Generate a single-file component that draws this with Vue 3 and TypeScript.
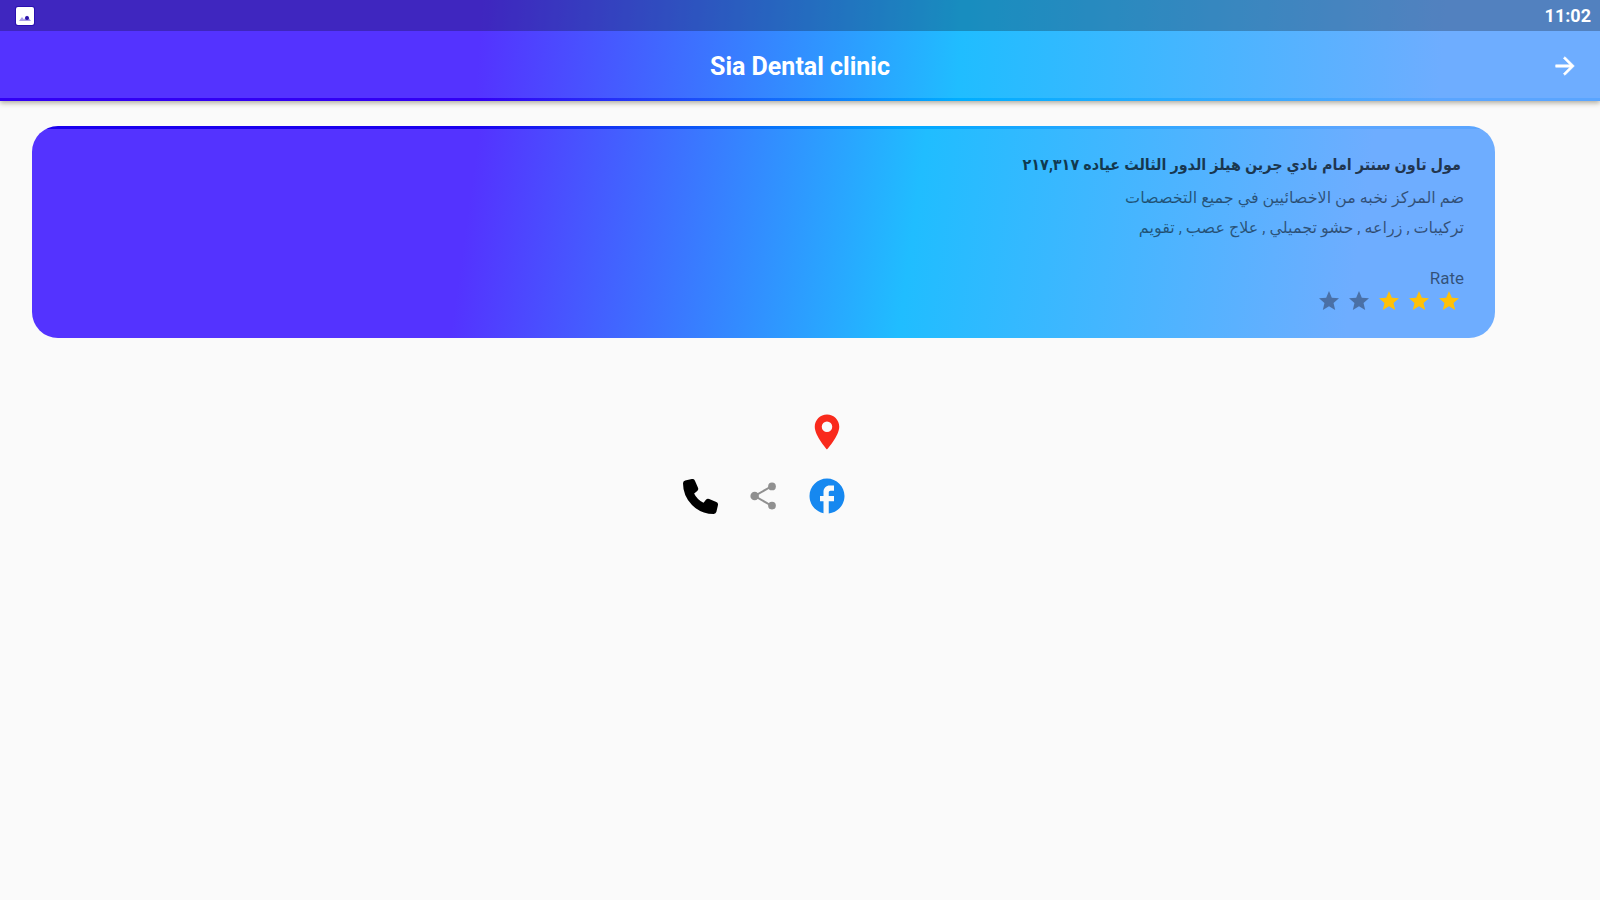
<script setup lang="ts">
interface Star {
  value: number
  filled: boolean
}

const rating = 3
const stars: Star[] = [1, 2, 3, 4, 5].map((value) => ({ value, filled: value <= rating }))
const services: string[] = [
  'ضم المركز نخبه من الاخصائيين في جميع التخصصات',
  'تركيبات , زراعه , حشو تجميلي , علاج عصب , تقويم',
]
</script>

<template>
  <div class="screen" dir="rtl">
    <header class="top">
      <div class="status" dir="ltr">
        <svg class="notice" viewBox="0 0 20 20" aria-hidden="true">
          <rect x="0" y="0" width="20" height="20" rx="3" fill="#2a0fb0" />
          <rect x="1" y="1" width="18" height="18" rx="2" fill="#fff" />
          <path d="M4 15 L7 11 L9 13.500 L12 9.500 L16 15 Z" fill="#a99de8" />
          <circle cx="12" cy="12" r="2" fill="#2a12a8" />
        </svg>
        <time class="clock">11:02</time>
      </div>
      <div class="bar">
        <h1 class="title">Sia Dental clinic</h1>
        <button class="back" type="button" aria-label="Back">
          <svg viewBox="0 0 24 24" aria-hidden="true">
            <path d="M12 4l-1.410 1.410L16.170 11H4v2h12.170l-5.580 5.590L12 20l8-8z" />
          </svg>
        </button>
      </div>
    </header>

    <main class="content">
      <section class="card">
        <h2 class="address">مول تاون سنتر امام نادي جرين هيلز الدور الثالث عياده ٢١٧,٣١٧</h2>
        <p v-for="line in services" :key="line" class="line">{{ line }}</p>
        <p class="rate">Rate</p>
        <div class="stars" role="img" aria-label="3 / 5">
          <svg
            v-for="star in stars"
            :key="star.value"
            class="star"
            :class="{ filled: star.filled }"
            viewBox="0 0 24 24"
          >
            <path d="M12 17.270L18.180 21l-1.640-7.030L22 9.240l-7.190-.610L12 2 9.190 8.630 2 9.240l5.460 4.730L5.820 21z" />
          </svg>
        </div>
      </section>

      <nav class="links">
        <a class="link pin" href="#map" aria-label="Location">
          <svg viewBox="0 0 24 24">
            <path d="M12 2C8.130 2 5 5.130 5 9c0 5.250 7 13 7 13s7-7.750 7-13c0-3.870-3.130-7-7-7zm0 10a3 3 0 0 1 0-6 3 3 0 0 1 0 6z" />
          </svg>
        </a>
        <a class="link facebook" href="#facebook" aria-label="Facebook">
          <svg viewBox="0 0 24 24">
            <path d="M22 12c0-5.520-4.480-10-10-10S2 6.480 2 12c0 4.840 3.440 8.870 8 9.800V15H8v-3h2V9.500C10 7.570 11.570 6 13.500 6H16v3h-2c-.550 0-1 .450-1 1v2h3v3h-3v6.950c5.050-.500 9-4.760 9-9.950z" />
          </svg>
        </a>
        <a class="link share" href="#share" aria-label="Share">
          <svg viewBox="0 0 24 24">
            <path d="M18 4.500L5 12l13 7.500" fill="none" stroke="currentColor" stroke-width="1.500" />
            <circle cx="18" cy="4.800" r="2.900" />
            <circle cx="5" cy="12" r="3.200" />
            <circle cx="18" cy="19.200" r="2.900" />
          </svg>
        </a>
        <a class="link phone" href="#call" aria-label="Call">
          <svg viewBox="-20 -20 552 552">
            <path
              transform="translate(512 0) scale(-1 1)"
              stroke="currentColor"
              stroke-width="40"
              stroke-linejoin="round"
              d="M493.400 24.600l-104-24c-11.300-2.600-22.900 3.300-27.500 13.900l-48 112c-4.200 9.800-1.400 21.300 6.900 28l60.600 49.600c-36 76.700-98.900 140.500-177.200 177.200l-49.600-60.600c-6.800-8.300-18.200-11.100-28-6.900l-112 48C3.900 366.500-2 378.100.600 389.400l24 104C27.100 504.200 36.700 512 48 512c256.100 0 464-207.500 464-464 0-11.200-7.700-20.900-18.600-23.400z"
            />
          </svg>
        </a>
      </nav>
    </main>
  </div>
</template>

<style>
body {
  margin: 0;
  background: #fafafa;
}
</style>

<style scoped>
.screen {
  min-height: 100vh;
  background: #fafafa;
  color: #fff;
  font-family: Roboto, "DejaVu Sans", sans-serif;
}

.top {
  position: relative;
  background:
    linear-gradient(94deg, #3200f4 30%, #00aeff 60%, #5aa5ff 90%) bottom / 100% 3px no-repeat,
    linear-gradient(94deg, #5433ff 30%, #20bdff 60%, #6eadff 90%);
  box-shadow: 0 2px 5px rgba(60, 50, 20, 0.4);
}

.status {
  display: flex;
  align-items: center;
  justify-content: space-between;
  height: 31px;
  padding: 0 9px 0 15px;
  background: rgba(0, 0, 0, 0.25);
}

.notice {
  width: 20px;
  height: 20px;
}

.clock {
  font-size: 18px;
  font-weight: 700;
}

.bar {
  display: grid;
  grid-template-columns: 70px 1fr 70px;
  align-items: center;
  height: 70px;
}

.title {
  grid-column: 2;
  grid-row: 1;
  margin: 0;
  text-align: center;
  font-size: 25px;
  font-weight: 700;
}

.back {
  grid-column: 1;
  grid-row: 1;
  display: flex;
  justify-content: center;
  padding: 0;
  border: 0;
  background: none;
  cursor: pointer;
}

.back svg {
  width: 28px;
  height: 28px;
  fill: #fff;
  stroke: #fff;
  stroke-width: 0.5;
}

.content {
  padding: 25px 105px 0 32px;
}

.card {
  box-sizing: border-box;
  min-height: 212px;
  padding: 24px 31px 20px;
  border-radius: 26px;
  background:
    linear-gradient(98deg, #1a00ee 30%, #00a8ff 60%, #5aa5ff 90%) top / 100% 3px no-repeat,
    linear-gradient(98deg, #5433ff 30%, #20bdff 60%, #6eadff 90%);
}

.address,
.line,
.rate {
  margin: 0;
  line-height: 30px;
}

.address {
  margin-bottom: 3px;
  padding-right: 3px;
  color: rgba(0, 0, 0, 0.7);
  font-family: Roboto, "DejaVu Sans Condensed", "DejaVu Sans", sans-serif;
  font-size: 16px;
  font-weight: 700;
}

.line {
  color: rgba(0, 0, 0, 0.54);
  font-size: 16px;
}

.rate {
  margin-top: 25px;
  line-height: 20px;
  color: rgba(0, 0, 0, 0.54);
  font-size: 17px;
}

.stars {
  display: flex;
  gap: 6px;
  padding: 1px 3px 0 0;
}

.star {
  width: 24px;
  height: 24px;
  fill: #4a70a6;
}

.star.filled {
  fill: #ffc107;
}

.links {
  display: grid;
  grid-template-columns: repeat(3, 42px);
  justify-content: center;
  gap: 22px 21px;
  padding-top: 73px;
}

.link {
  display: flex;
  align-items: center;
  justify-content: center;
  height: 42px;
}

.link svg {
  width: 42px;
  height: 42px;
  fill: currentColor;
}

.pin {
  grid-column: 1 / -1;
  justify-self: start;
  width: 42px;
  color: #f92a1c;
}

.facebook {
  color: #1688f0;
}

.share {
  color: #909090;
}

.share svg {
  width: 32px;
  height: 32px;
}

.phone {
  color: #000;
}

.phone svg {
  width: 35px;
  height: 35px;
}
</style>
